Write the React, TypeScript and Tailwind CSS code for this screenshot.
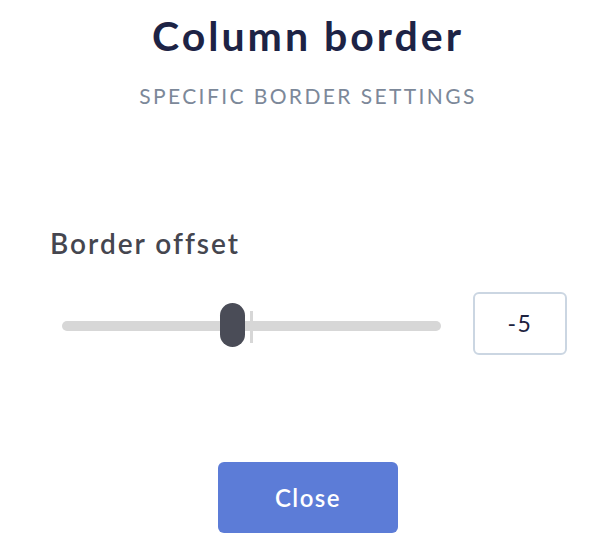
import React from "react";

export default function App() {
  const value = -5;
  return (
    <div className="w-[606px] h-[552px] bg-white flex flex-col items-center pl-[10px]" style={{ fontFamily: "Lato, 'Noto Sans', sans-serif" }}>
      <h1 className="mt-[10px] text-[41px] leading-[52px] font-bold text-[#1d2345] tracking-[3px]">Column border</h1>
      <div className="mt-[21px] text-[21px] leading-[26px] tracking-[2.4px] text-[#7c8899]">SPECIFIC BORDER SETTINGS</div>
      <div className="w-full mt-[117px] pl-[40px] pr-[39px]">
        <div className="text-[28px] leading-[34px] font-semibold text-[#45464f] tracking-[2px]">Border offset</div>
        <div className="mt-[32px] flex">
          <div className="relative ml-[12px] w-[379px] h-[63px]">
            <div className="absolute top-[29px] left-0 w-full h-[10px] rounded-full bg-[#d7d7d7]" />
            <div className="absolute top-[19px] left-[188px] w-[3px] h-[32px] bg-[#d7d7d7]" />
            <div className="absolute top-[11px] left-[158px] w-[25px] h-[44px] rounded-full bg-[#4a4c57]" />
          </div>
          <div className="ml-auto w-[94px] h-[63px] border-2 border-[#cbd6e2] rounded-[6px] flex items-center justify-center text-[23px] text-[#1d2240] tracking-[1.5px]">
            {value}
          </div>
        </div>
      </div>
      <button className="mt-[107px] w-[180px] h-[71px] rounded-[6px] bg-[#5c7cd7] text-white text-[24px] font-semibold tracking-[1.5px]">
        Close
      </button>
    </div>
  );
}
